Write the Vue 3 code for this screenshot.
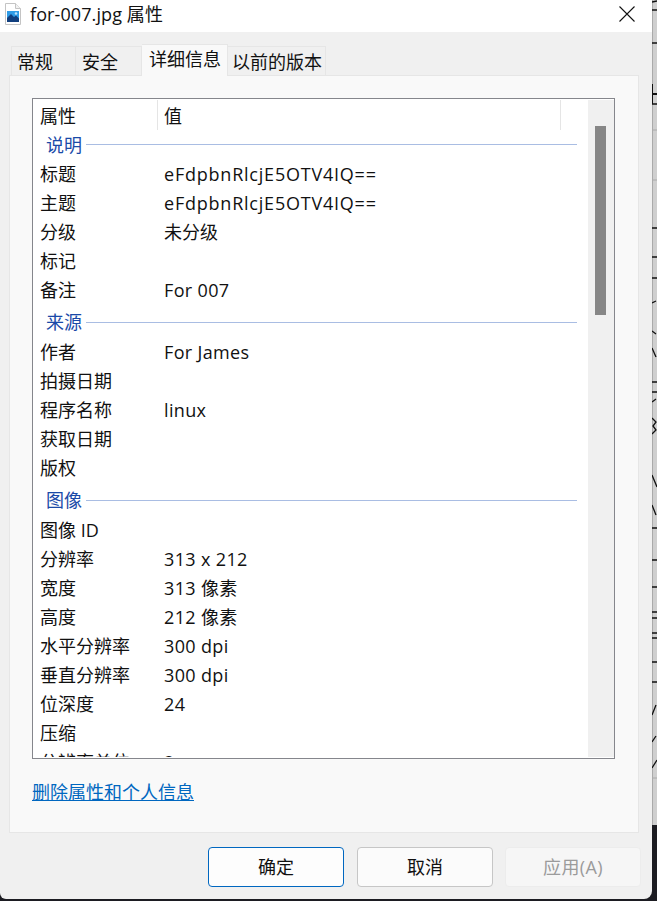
<script setup>
const tabs = [
  { label: '常规', cls: '' },
  { label: '安全', cls: '' },
  { label: '详细信息', cls: 'active' },
  { label: '以前的版本', cls: 'last' }
]
const groups = [
  { title: '说明', rows: [['标题', 'eFdpbnRlcjE5OTV4IQ==', 'wide'], ['主题', 'eFdpbnRlcjE5OTV4IQ==', 'wide'], ['分级', '未分级'], ['标记', ''], ['备注', 'For 007', 'latin']] },
  { title: '来源', rows: [['作者', 'For James', 'latin'], ['拍摄日期', ''], ['程序名称', 'linux', 'latin'], ['获取日期', ''], ['版权', '']] },
  { title: '图像', rows: [['图像 ID', ''], ['分辨率', '313 x 212', 'latin'], ['宽度', '313 像素', 'latin'], ['高度', '212 像素', 'latin'], ['水平分辨率', '300 dpi', 'latin'], ['垂直分辨率', '300 dpi', 'latin'], ['位深度', '24', 'latin'], ['压缩', ''], ['分辨率单位', '2']] }
]
</script>

<template>
  <div class="screen">
    <div class="window">
      <header class="titlebar">
        <svg class="file-icon" width="16" height="22" viewBox="0 0 16 22">
          <path d="M.5.5h10l5 5v16H.5z" fill="#fff" stroke="#c4c4c4" />
          <path d="M10.500.5v5h5" fill="#f2f2f2" stroke="#c4c4c4" />
          <rect x="2" y="8" width="12" height="11" fill="#2f9be6" />
          <path d="M2 19v-4l4-4 3 3 2-1.500 3 3V19z" fill="#123f7e" />
          <circle cx="11" cy="10.500" r="1.300" fill="#bfe3fb" />
        </svg>
        <span class="title">for-007.jpg 属性</span>
        <svg class="close" width="16" height="16" viewBox="0 0 16 16">
          <path d="M.5.500l15 15M15.500.500l-15 15" stroke="#111" stroke-width="1.100" fill="none" />
        </svg>
      </header>

      <main class="body">
        <nav class="tabs">
          <div v-for="t in tabs" :key="t.label" class="tab" :class="t.cls">{{ t.label }}</div>
        </nav>

        <section class="panel">
          <div class="listbox">
            <div class="list">
              <div class="list-head">
                <span class="head-a">属性</span>
                <span class="head-b">值</span>
              </div>
              <div v-for="g in groups" :key="g.title" class="group">
                <div class="group-title">
                  <span>{{ g.title }}</span>
                  <i class="rule"></i>
                </div>
                <div v-for="r in g.rows" :key="r[0]" class="row">
                  <span>{{ r[0] }}</span>
                  <span :class="r[2]">{{ r[1] }}</span>
                </div>
              </div>
            </div>
            <div class="scrollbar"><div class="thumb"></div></div>
          </div>
          <a class="link">删除属性和个人信息</a>
        </section>

        <footer class="buttons">
          <button class="btn primary">确定</button>
          <button class="btn">取消</button>
          <button class="btn disabled">应用(A)</button>
        </footer>
      </main>
    </div>

    <aside class="backdrop">
      <svg width="5" height="825" viewBox="0 0 5 825">
        <g stroke="#111" stroke-width="1.300" fill="none">
          <path d="M0 2l5-1M0 10h5M0 43h5M0 104h5M0 228h5M0 257h5M0 278h5" />
          <path d="M0 84v20M1 94h4" stroke-width="2" />
          <path d="M0 303l4-2M0 331l4 3M0 348l4 9M0 382h5M0 392h5M0 402l4-3M0 418l4 4 -3 4 3 4-4 4M0 475l5 12M0 505l4 10M0 528h5M0 560h5M0 587h5" />
          <path d="M0 612h5M0 618h5M0 633h5M0 638h5M0 662h5M0 682h5M0 715l4-10M0 742l4-6M0 768l5-8" />
        </g>
        <path d="M0 130h5M0 180h5M0 778h5" stroke="#aaa" />
      </svg>
    </aside>
  </div>
</template>

<style scoped>
.screen {
  display: flex;
  width: 657px;
  height: 901px;
  overflow: hidden;
  background: #1c1c22;
  font-family: "Open Sans", "Noto Sans CJK SC", sans-serif;
  font-size: 18px;
  color: #111;
}
.window {
  width: 652px;
  height: 899px;
  flex: none;
  display: flex;
  flex-direction: column;
  border-bottom-right-radius: 8px;
  border-bottom-left-radius: 6px;
  overflow: hidden;
  background: #f0f0f0;
}
.titlebar {
  height: 32px;
  box-sizing: border-box;
  flex: none;
  display: flex;
  align-items: center;
  background: #fff;
  padding: 0 17px 4px 5px;
}
.file-icon { flex: none; }
.title {
  margin: 0 0 3px 9px;
  flex: 1;
  font-size: 18px;
  letter-spacing: .1px;
}
.body {
  flex: 1;
  display: flex;
  flex-direction: column;
  padding: 12px 0 0 9px;
}
.tabs {
  display: grid;
  grid-template-columns: 65px 66px 86px 98px;
  margin-left: 2px;
  height: 31px;
  align-items: end;
  position: relative;
  z-index: 1;
}
.tab {
  height: 29px;
  line-height: 30px;
  padding-left: 6px;
  background: #f0f0f0;
  border: 1px solid #e6e6e6;
  border-bottom: 0;
  border-left-width: 0;
  box-sizing: border-box;
  white-space: nowrap;
}
.tab:first-child { border-left-width: 1px; padding-left: 5px; }
.tab.active {
  height: 32px;
  line-height: 29px;
  padding-left: 7px;
  background: #f9f9f9;
  margin-bottom: -1px;
}
.tab.last { padding-left: 4px; }
.panel {
  width: 630px;
  height: 758px;
  box-sizing: border-box;
  background: #f9f9f9;
  border: 1px solid #e6e6e6;
  padding: 22px 23px 0 22px;
  flex: none;
}
.listbox {
  height: 661px;
  box-sizing: border-box;
  display: flex;
  background: #fff;
  border: 1px solid #85868c;
  padding: 1px 0 1px 0;
}
.list {
  flex: 1;
  overflow: hidden;
  min-width: 0;
}
.list-head {
  display: flex;
  height: 30px;
  line-height: 33px;
}
.head-a {
  box-sizing: border-box;
  width: 125px;
  padding-left: 7px;
  border-right: 1px solid #e5e5e5;
}
.head-b {
  box-sizing: border-box;
  width: 403px;
  padding-left: 6px;
  border-right: 1px solid #e5e5e5;
}
.group-title {
  box-sizing: border-box;
  display: flex;
  align-items: center;
  height: 31px;
  padding: 0 0 4px 13px;
  color: #1a4aa8;
  gap: 4px;
}
.rule {
  width: 491px;
  height: 1px;
  margin-top: 2px;
  background: #a9bde3;
}
.group + .group .group-title {
  height: 32px;
  margin-top: 1px;
}
.row {
  display: grid;
  grid-template-columns: 124px 1fr;
  height: 29px;
  line-height: 27px;
  padding-left: 7px;
  white-space: pre;
}
.latin { letter-spacing: .35px; }
.wide { letter-spacing: .78px; }
.scrollbar {
  width: 26px;
  flex: none;
  background: #f0f0f0;
  padding: 26px 8px 0 7px;
  box-sizing: border-box;
}
.thumb {
  width: 11px;
  height: 189px;
  background: #868686;
}
.link {
  display: block;
  margin-top: 21px;
  color: #0067c0;
  text-decoration: underline;
  line-height: 24px;
}
.buttons {
  display: flex;
  gap: 13px;
  margin: 14px 0 0 199px;
}
.btn {
  width: 136px;
  height: 40px;
  margin: 0;
  box-sizing: border-box;
  font: inherit;
  color: #111;
  background: #fbfbfb;
  border: 1px solid #c6c6c6;
  border-radius: 4px;
  padding: 0 0 2px;
}
.btn.primary { border-color: #0067c0; background: #fdfdfd; }
.btn.disabled {
  margin-left: -1px;
  color: #9b9b9b;
  background: #f6f6f6;
  border-color: #ececec;
  letter-spacing: .4px;
}
.backdrop {
  flex: none;
  width: 5px;
  height: 825px;
  background: #cfcfcf;
  box-shadow: inset 1px 0 0 #aaa;
}
.backdrop svg { display: block; }
</style>
